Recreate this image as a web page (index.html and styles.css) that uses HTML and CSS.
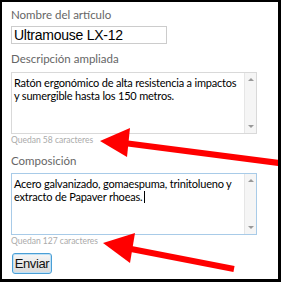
FILE: index.html
```html
<!DOCTYPE html>
<html lang="es">
<head>
<meta charset="utf-8">
<title>Artículo</title>
<link rel="stylesheet" href="styles.css">
</head>
<body>
<div class="frame">
  <form class="form">
    <div class="field">
      <label class="label">Nombre del artículo</label>
      <div class="input">Ultramouse LX-12</div>
    </div>
    <div class="field">
      <label class="label">Descripción ampliada</label>
      <div class="area">
        <div class="area-text">Ratón ergonómico de alta resistencia a impactos
y sumergible hasta los 150 metros.</div>
        <div class="scroll"><span class="up"></span><span class="down"></span></div>
      </div>
      <div class="count">Quedan 58 caracteres</div>
    </div>
    <div class="field">
      <label class="label">Composición</label>
      <div class="area focus">
        <div class="area-text">Acero galvanizado, gomaespuma, trinitolueno y
extracto de Papaver rhoeas.<span class="caret"></span></div>
        <div class="scroll"><span class="up"></span><span class="down"></span></div>
      </div>
      <div class="count">Quedan 127 caracteres</div>
    </div>
    <div class="actions">
      <button type="button" class="btn">Enviar</button>
    </div>
  </form>

  <svg class="arrows" width="281" height="282" viewBox="0 0 281 282">
    <line x1="124" y1="143" x2="279" y2="163" stroke="#f00" stroke-width="6"/>
    <polygon points="100,141 130,128 127,157" fill="#f00"/>
    <line x1="126" y1="248" x2="234" y2="269" stroke="#f00" stroke-width="6"/>
    <polygon points="103,243 135,233 130,263" fill="#f00"/>
  </svg>
</div>
</body>
</html>
```

FILE: styles.css
```css
body { margin:0; padding:0; }
.frame { position:relative; width:281px; height:282px; box-sizing:border-box; border:solid #000; border-width:2px 3px 3px 2px; background:#fff; overflow:hidden; }
.form { padding:6px 0 0 9px; }
.field { display:flex; flex-direction:column; align-items:flex-start; }
.field + .field { margin-top:8px; }
.label { font-family:Lato, "Open Sans", sans-serif; font-size:11.5px; color:#666; line-height:14px; }
.input { margin-top:4px; width:156px; height:18px; box-sizing:border-box; border:1px solid #ccc; padding:0 0 0 2px; font-family:"Liberation Sans", Arial, sans-serif; font-size:14px; letter-spacing:-0.25px; line-height:16px; color:#000; }
.area { margin-top:6px; width:246px; height:62px; box-sizing:border-box; border:1px solid #d9d9d9; display:flex; }
.field + .field + .field .area { margin-top:5px; }
.area.focus { border-color:#a8cbe8; }
.area-text { flex:1; padding:3px 4px 0 2px; white-space:pre-line; font-family:Lato, "Open Sans", sans-serif; font-size:11px; letter-spacing:-0.2px; line-height:13px; color:#000; }
.scroll { width:11px; background:#f5f5f5; border-left:1px solid #e6e6e6; display:flex; flex-direction:column; justify-content:space-between; align-items:center; padding:5px 0 5px; }
.up { width:0; height:0; border:3px solid transparent; border-bottom:3px solid #999; border-top:0; }
.down { width:0; height:0; border:3px solid transparent; border-top:3px solid #999; border-bottom:0; }
.caret { display:inline-block; width:1px; height:12px; margin-left:1px; background:#000; vertical-align:-2px; }
.count { font-family:Lato, "Open Sans", sans-serif; font-size:8.5px; color:#aaa; line-height:12px; }
.actions { margin-top:6px; padding-left:1px; }
.btn { width:40px; height:21px; padding:0; border:1px solid #4a9fd6; border-radius:3px; background:linear-gradient(#f6f6f6, #dadada); box-shadow:inset 0 0 0 1px #bfe0f5; font-family:"Liberation Sans", Arial, sans-serif; font-size:13px; letter-spacing:-0.4px; color:#111; }
.arrows { position:absolute; left:-2px; top:-2px; }
```
